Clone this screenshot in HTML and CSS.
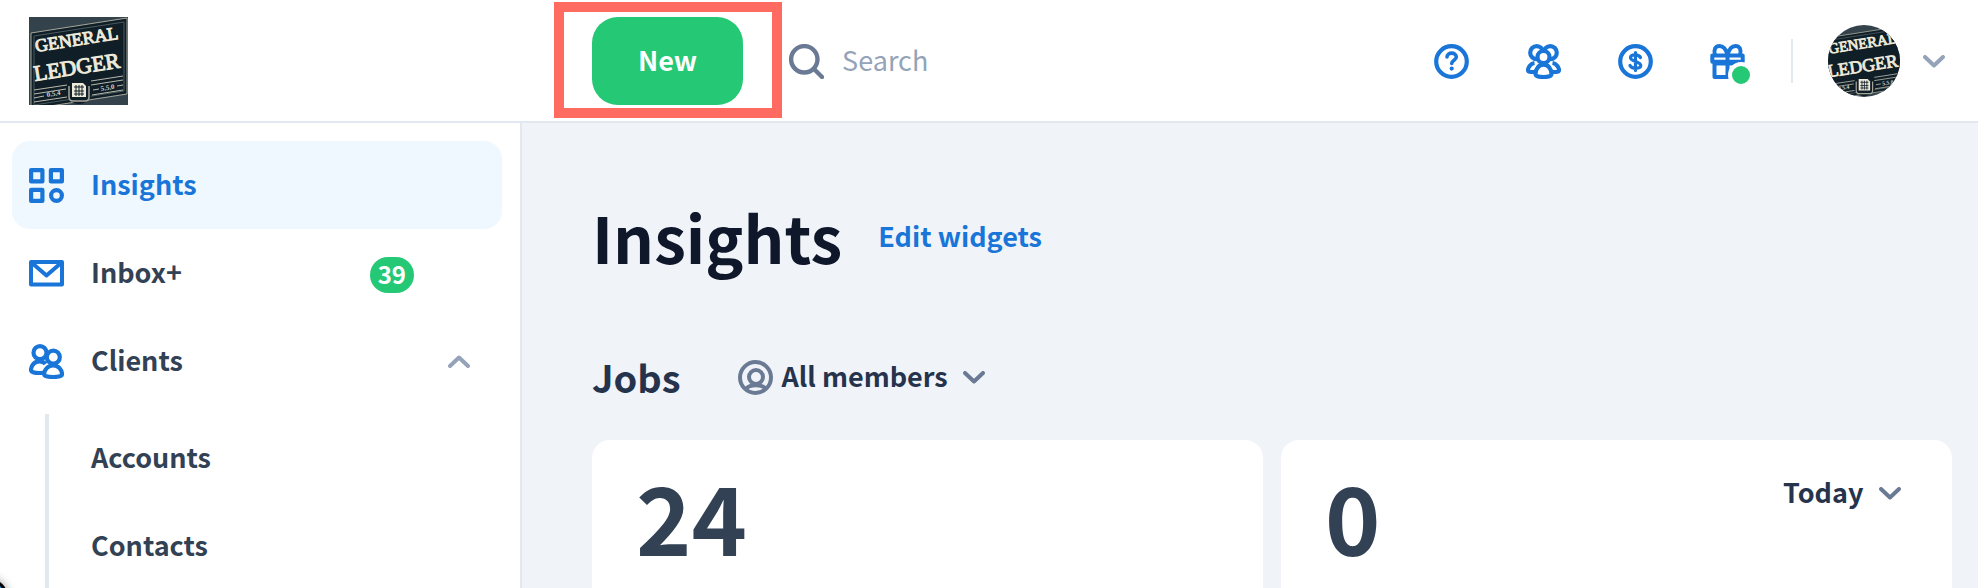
FILE: index.html
```html
<!DOCTYPE html>
<html lang="en">
<head>
<meta charset="utf-8">
<meta name="viewport" content="width=device-width, initial-scale=1">
<title>Insights</title>
<link rel="stylesheet" href="styles.css">
</head>
<body>
<svg class="defs" aria-hidden="true">
  <symbol id="logo" viewBox="0 0 99 88" preserveAspectRatio="xMidYMid slice">
    <rect width="99" height="88" fill="#33424b"/>
    <path d="M2 16 98 1V77L2 92Z" fill="#101e27" stroke="#a5a79c" stroke-width="1"/>
    <path d="M5 19 95 5V74L5 88Z" fill="none" stroke="#4b5a5e" stroke-width="1"/>
    <g fill="#eeeadb" stroke="#eeeadb" stroke-width="1" font-family="'Liberation Serif', serif">
      <text x="7" y="35" font-size="18" transform="rotate(-9 7 35)">GENERAL</text>
      <text x="6" y="64" font-size="22" transform="rotate(-9 6 64)">LEDGER</text>
    </g>
    <path d="M5 73 38 68M5 77 37 72M5 81 15 79M5 85 38 80M62 64 94 59M62 68 94 63M64 73 70 72M88 69 94 68M63 78 94 73" stroke="#b9b9ac" stroke-width="1"/>
    <g fill="#d8d6c8" font-family="'Liberation Serif', serif" font-size="7" font-weight="700">
      <text x="18" y="80" transform="rotate(-9 18 80)">0.5.4</text>
      <text x="72" y="74" transform="rotate(-9 72 74)">5.5.0</text>
    </g>
    <circle cx="50" cy="74" r="13" fill="#101e27"/>
    <path d="M40 69V80Q40 84 44 84H56Q60 84 60 80V69" fill="none" stroke="#a5a79c" stroke-width="1.5"/>
    <path d="M43 66H54L57 69V80H43Z" fill="#eeeadb"/>
    <path d="M45 70H55M45 74H55M45 77H55M47 68V79M50 68V79M53 68V79" stroke="#101e27" stroke-width="1"/>
  </symbol>
  <symbol id="chevron" viewBox="0 0 22 13">
    <path d="M2 2 11 10.5 20 2" fill="none" stroke="currentColor" stroke-width="4" stroke-linecap="round" stroke-linejoin="round"/>
  </symbol>
</svg>

<header class="topbar">
  <a class="brand" href="#" aria-label="General Ledger"><svg class="brand-logo" aria-hidden="true"><use href="#logo"/></svg></a>
  <div class="actions">
    <div class="new-wrap">
      <button class="new" type="button">New</button>
      <span class="highlight"></span>
    </div>
    <label class="search">
      <svg class="icon" viewBox="0 0 35 35" fill="none" stroke="#6b7a94" stroke-width="4.4" stroke-linecap="round" aria-hidden="true"><circle cx="15.3" cy="15.3" r="13.2"/><path d="m25 25 8 8"/></svg>
      <input class="search-input" type="text" placeholder="Search" aria-label="Search">
    </label>
  </div>
  <div class="tools">
    <button class="tool" type="button" aria-label="Help">
      <svg class="icon" viewBox="0 0 35 35" fill="none" stroke="currentColor" stroke-linecap="round" stroke-linejoin="round"><circle cx="17.5" cy="17.5" r="15.3" stroke-width="4.2"/><path d="M13 13C13 7.8 22.3 7.8 22.3 13C22.3 16.3 17.7 16 17.7 19.5" stroke-width="3.6"/><circle cx="17.7" cy="24.6" r="1.1" stroke-width="2"/></svg>
    </button>
    <button class="tool" type="button" aria-label="Team">
      <svg class="icon" viewBox="0 0 35 35" fill="none" stroke="currentColor" stroke-width="4.2"><circle cx="10.7" cy="8.7" r="6.5"/><circle cx="24.3" cy="8.7" r="6.5"/><path d="M8.5 19C5 19.5 2 23 2 26Q2 28 5 28H9M26.5 19C30 19.5 33 23 33 26Q33 28 30 28H26"/><circle cx="17.5" cy="13" r="6" fill="#fff"/><path d="M9.5 30C9.5 24.5 13 20.7 17.5 20.7S25.5 24.5 25.5 30Q25.5 33 17.5 33T9.5 30Z" fill="#fff"/></svg>
    </button>
    <button class="tool" type="button" aria-label="Billing">
      <svg class="icon" viewBox="0 0 35 35" fill="none" stroke="currentColor" stroke-linecap="round"><circle cx="17.5" cy="17.5" r="15.3" stroke-width="4.2"/><path d="M17.5 8.5V26.5M22.5 13.5C21 10 12.5 10 12.5 13.7S22.8 17.5 22.8 21.5S13.5 25 12 21.5" stroke-width="3.2"/></svg>
    </button>
    <button class="tool" type="button" aria-label="What's new">
      <svg class="icon" viewBox="0 0 35 35" fill="none" stroke="currentColor" stroke-width="4"><path d="M17.5 11C16 5 13 2 9.5 2C5 2 3.5 6 5 11M17.5 11C19 5 22 2 25.5 2C30 2 31.500 6 30 11"/><path d="M2.3 11.5H32.7V17.8H2.3Z" stroke-linejoin="round"/><path d="M4.5 19V33H30.5V19" stroke-linejoin="round"/><path d="M17.5 11V33"/><path d="M3 20H32" stroke-width="3"/></svg>
      <span class="dot"></span>
    </button>
    <span class="divider"></span>
    <button class="account" type="button" aria-label="Account">
      <svg class="avatar" aria-hidden="true"><use href="#logo"/></svg>
      <svg class="chevron muted" aria-hidden="true"><use href="#chevron"/></svg>
    </button>
  </div>
</header>

<div class="layout">
  <nav class="sidebar">
    <a class="nav-item active" href="#">
      <svg class="icon" viewBox="0 0 35 35" fill="none" stroke="currentColor" stroke-width="4.2" stroke-linejoin="round" aria-hidden="true"><path d="M2.1 2.1H13.4V13.4H2.1ZM21.9 2.1H32.9V13.4H21.9ZM2.1 21.9H13.4V32.9H2.1Z"/><circle cx="27.5" cy="27.5" r="5.4"/></svg>
      <span class="nav-label">Insights</span>
    </a>
    <a class="nav-item" href="#">
      <svg class="icon" viewBox="0 0 35 35" fill="none" stroke="currentColor" stroke-width="4" stroke-linejoin="round" aria-hidden="true"><path d="M2 6H33V28.5H2Z"/><path d="M3 7 17.5 19.5 32 7"/></svg>
      <span class="nav-label">Inbox+</span>
      <span class="badge">39</span>
    </a>
    <a class="nav-item" href="#">
      <svg class="icon" viewBox="0 0 35 35" fill="none" stroke="currentColor" stroke-width="4.2" aria-hidden="true"><circle cx="11" cy="8.7" r="6.5"/><path d="M17 28.5Q15 29 10.5 29Q2 29 2 26C2 21.5 5.5 17.3 10.5 17.3C13 17.3 15 18 16.5 20"/><circle cx="24.3" cy="13.2" r="6.5" fill="#fff"/><path d="M15.2 30.5C15.2 25.5 19 21.5 24.2 21.5S33 25.5 33 30.5Q33 33 24.2 33T15.2 30.5Z" fill="#fff"/></svg>
      <span class="nav-label">Clients</span>
      <svg class="chevron muted up" aria-hidden="true"><use href="#chevron"/></svg>
    </a>
    <div class="subnav">
      <a class="sub-item" href="#"><span class="nav-label">Accounts</span></a>
      <a class="sub-item" href="#"><span class="nav-label">Contacts</span></a>
    </div>
    <span class="help-bubble"></span>
  </nav>

  <main class="main">
    <div class="page-head">
      <h1 class="page-title">Insights</h1>
      <a class="edit" href="#">Edit widgets</a>
    </div>
    <div class="section-head">
      <h2 class="section-title">Jobs</h2>
      <label class="picker">
        <svg class="icon" viewBox="0 0 35 35" fill="none" stroke="currentColor" stroke-width="4" aria-hidden="true"><circle cx="17.5" cy="17.5" r="15.5"/><circle cx="18" cy="17" r="7"/><path d="M8 29C11 24 25 24 27.5 29"/></svg>
        <select class="select" aria-label="Members"><option>All members</option></select>
        <svg class="chevron" aria-hidden="true"><use href="#chevron"/></svg>
      </label>
    </div>
    <div class="cards">
      <section class="card"><strong class="count">24</strong></section>
      <section class="card">
        <strong class="count">0</strong>
        <label class="picker">
          <select class="select" aria-label="Period"><option>Today</option></select>
          <svg class="chevron" aria-hidden="true"><use href="#chevron"/></svg>
        </label>
      </section>
    </div>
  </main>
</div>
</body>
</html>
```
FILE: styles.css
```css
* { box-sizing: border-box; }

body {
  margin: 0;
  height: 100vh;
  display: flex;
  flex-direction: column;
  overflow: hidden;
  background: #fff;
  color: #334155;
  font-family: "Noto Sans CJK SC", "Noto Sans", sans-serif;
  font-size: 27px;
  line-height: 40px;
}

a { color: inherit; text-decoration: none; }
button, input, select { font: inherit; color: inherit; border: 0; padding: 0; background: none; }
svg { display: block; flex: none; }

.defs { position: absolute; width: 0; height: 0; }
.icon { width: 35px; height: 35px; }
.chevron { width: 22px; height: 13px; }
.muted { color: #94a3b8; }
.up { transform: rotate(180deg); }

.topbar {
  display: flex;
  flex: none;
  align-items: center;
  padding: 17px 33px 16px 29px;
  border-bottom: 2px solid #e2e8f0;
}
.brand { width: 563px; }
.brand-logo { width: 99px; height: 88px; }
.actions { display: flex; flex: 1; align-items: center; gap: 46px; }
.new-wrap { position: relative; }
.new {
  display: block;
  height: 88px;
  padding: 0 46px 3px;
  border-radius: 26px;
  background: #24c875;
  color: #fff;
  font-weight: 700;
}
.highlight {
  position: absolute;
  inset: -15px -39px -13px -38px;
  border: 10px solid #ff6b61;
  pointer-events: none;
}
.search { display: flex; flex: 1; align-items: center; gap: 18px; }
.search-input { flex: 1; min-width: 0; padding-bottom: 2px; outline: 0; }
.search-input::placeholder { color: #94a3b8; opacity: 1; }

.tools { display: flex; align-items: center; gap: 57px; color: #1976d8; }
.tool { position: relative; }
.dot {
  position: absolute;
  right: -9px;
  bottom: -9px;
  width: 26px;
  height: 26px;
  border: 4px solid #fff;
  border-radius: 50%;
  background: #24c875;
}
.divider { width: 2px; height: 44px; margin: 0 -22px 0 -11px; background: #e2e8f0; }
.account { display: flex; align-items: center; gap: 23px; }
.avatar { width: 72px; height: 72px; border-radius: 50%; }

.layout { display: flex; flex: 1; min-height: 0; }
.sidebar {
  position: relative;
  flex: none;
  width: 522px;
  padding: 18px 18px 0 12px;
  border-right: 2px solid #e2e8f0;
  overflow: hidden;
  font-weight: 700;
}
.nav-item {
  display: flex;
  align-items: center;
  height: 88px;
  padding: 0 32px 0 17px;
  gap: 27px;
  border-radius: 18px;
}
.nav-item > .icon { color: #1976d8; }
.nav-label { flex: 1; padding-bottom: 3px; }
.active { background: #eff7ff; color: #1976d8; }
.badge {
  margin: 3px 56px 0 0;
  padding: 0 8px 2px;
  border-radius: 18px;
  background: #24c875;
  color: #fff;
  font-size: 24px;
  font-weight: 700;
  line-height: 34px;
}
.subnav { margin: 9px 0 0 33px; border-left: 4px solid #e0e8f0; }
.sub-item { display: flex; align-items: center; height: 88px; padding-left: 42px; }
.help-bubble {
  position: absolute;
  left: -32px;
  bottom: -30px;
  width: 40px;
  height: 40px;
  border: 3px solid #000;
  border-radius: 50%;
  background: #1b93dc;
  box-shadow: 0 0 10px rgba(0, 0, 0, 0.4);
}

.main {
  display: flex;
  flex: 1;
  flex-direction: column;
  min-width: 0;
  padding: 67px 26px 0 70px;
  background: #f0f4f9;
}
.page-head { display: flex; align-items: center; gap: 36px; }
.page-title { margin: 0; color: #0f172a; font-size: 64px; font-weight: 700; line-height: 92px; }
.edit { color: #1976d8; font-weight: 700; }
.section-head { display: flex; align-items: center; gap: 58px; margin-top: 66px; color: #26334d; }
.section-title { margin: 0; font-size: 38px; font-weight: 700; line-height: 58px; }
.picker { display: flex; align-items: center; gap: 8px; color: #6b7a94; }
.select { appearance: none; margin-right: 7px; padding-bottom: 2px; color: #26334d; font-weight: 700; }
.cards { display: grid; flex: 1; grid-template-columns: 1fr 1fr; gap: 18px; margin-top: 34px; }
.card {
  display: flex;
  justify-content: space-between;
  align-items: flex-start;
  padding: 32px 51px 0 44px;
  border-radius: 18px 18px 0 0;
  background: #fff;
}
.count { font-size: 94px; font-weight: 700; line-height: 86px; }
```
